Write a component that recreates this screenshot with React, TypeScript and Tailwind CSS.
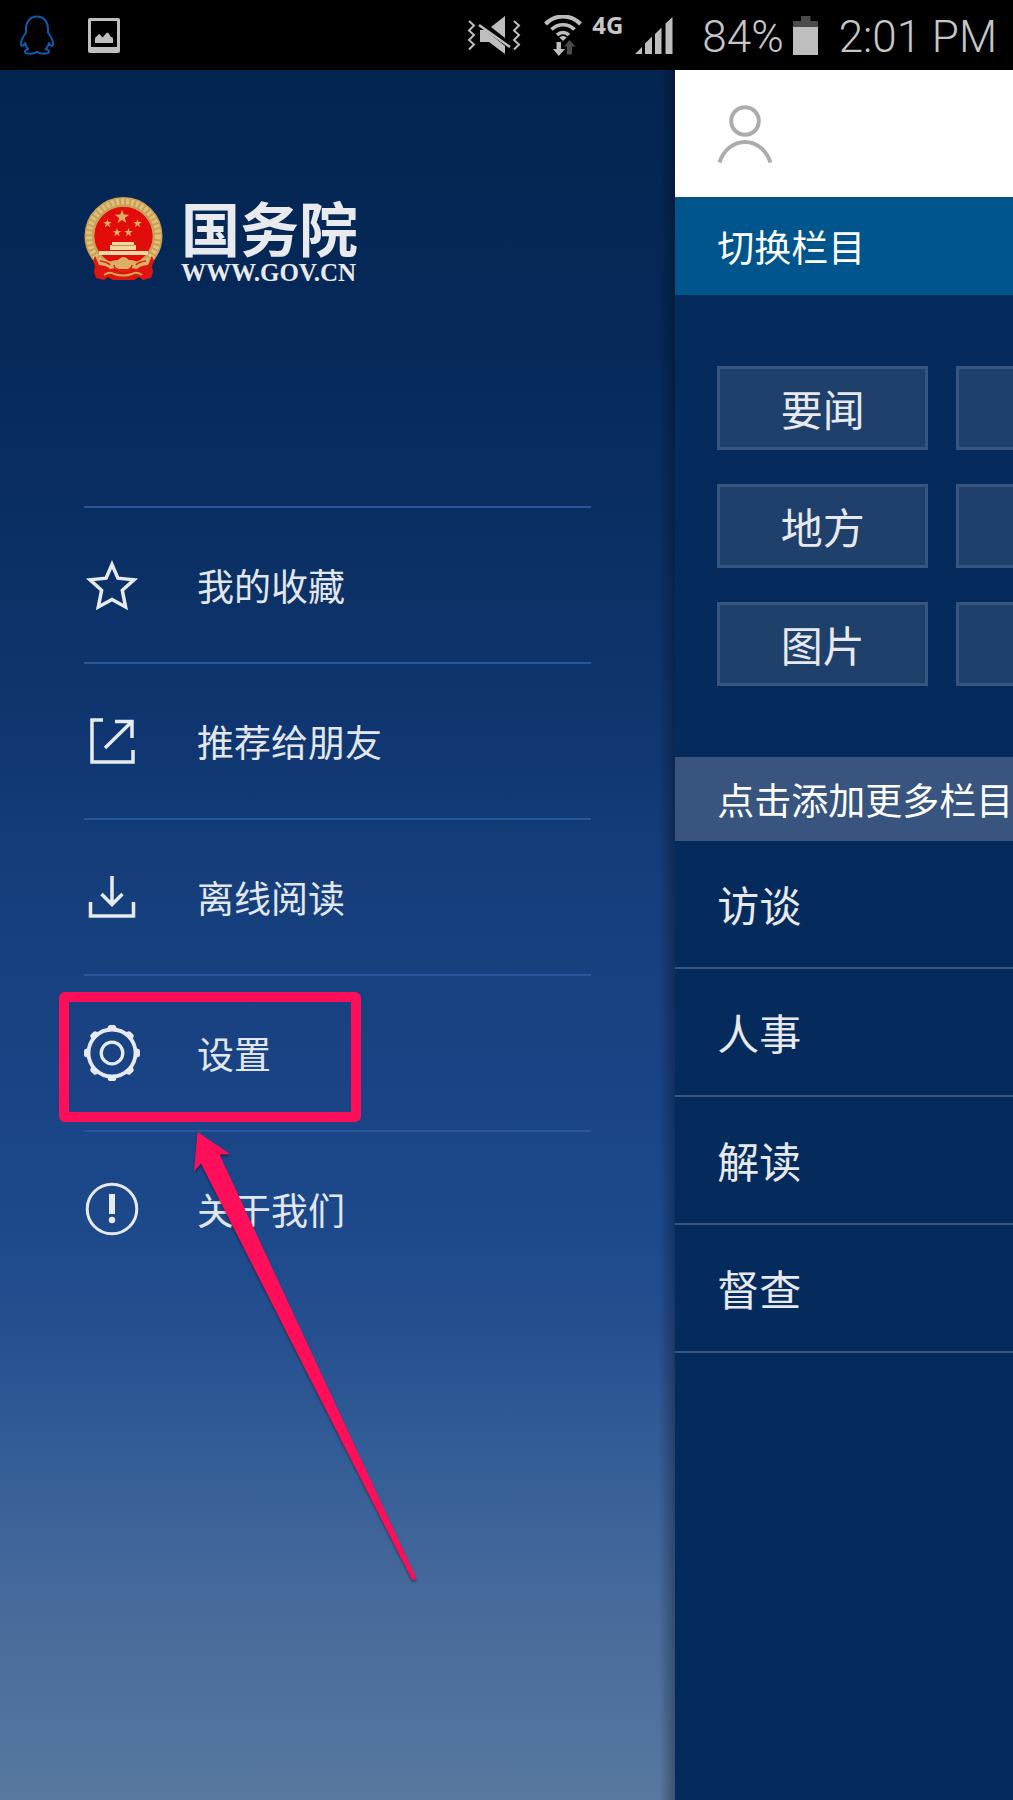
import type { ReactNode } from 'react';

const CJK = "font-['Noto_Sans_CJK_SC',sans-serif]";

function QQIcon() {
  return (
    <svg width="34" height="40" viewBox="0 0 34 40" fill="none" stroke="#0d5cad" strokeWidth="2" strokeLinejoin="round" aria-hidden="true">
      <path d="M17 1.500C9.500 1.500 6 7.500 6 14v3.500C3.500 21 1 25 1 28.500c0 1.500.3 2.500 1 2.500 1.200 0 2.200-1.600 3-3 .6 2.500 1.600 4.500 3.200 6-2 .6-3.200 1.400-3.200 2.700 0 1.500 2 2 5.500 2 3 0 5-.7 6.500-2 1.500 1.300 3.500 2 6.500 2 3.500 0 5.500-.5 5.500-2 0-1.300-1.200-2.100-3.200-2.700 1.600-1.500 2.600-3.500 3.200-6 .8 1.400 1.800 3 3 3 .7 0 1-1 1-2.500 0-3.500-2.500-7.500-5-11V14C28 7.500 24.500 1.500 17 1.500z" />
    </svg>
  );
}

function PictureIcon() {
  return (
    <svg width="32" height="35" viewBox="0 0 32 35" fill="#bebebe" aria-hidden="true">
      <path fillRule="evenodd" d="M2 0h28a2 2 0 0 1 2 2v31a2 2 0 0 1-2 2H2a2 2 0 0 1-2-2V2a2 2 0 0 1 2-2zM3 3v26h26V3z" />
      <path d="M7 25v-5l4-4 1 .5 2.500 3 4.500-5 2 1 1.500 3 2.500 1.500v5z" />
    </svg>
  );
}

function MuteVibrateIcon() {
  return (
    <svg width="54" height="38" viewBox="0 0 54 38" fill="#bebebe" aria-hidden="true">
      <path d="M2 5l5 4.500-5 5 5 4.500-5 5 5 4.500-5 5M47 5l5 4.500-5 5 5 4.500-5 5 5 4.500-5 5" fill="none" stroke="#bebebe" strokeWidth="2" />
      <path d="M38 0v22L24 11z" />
      <path d="M13 14h5l20 16v8L22 26h-9z" />
      <path d="M12 9l31 22" stroke="#bebebe" strokeWidth="2.500" />
    </svg>
  );
}

function WifiIcon() {
  return (
    <svg width="38" height="41" viewBox="0 0 38 41" fill="none" stroke="#bebebe" aria-hidden="true">
      <path d="M1.500 9C11-1 27-1 36.500 9" strokeWidth="4" />
      <path d="M7.500 14.500c6.500-6.500 16.500-6.500 23 0" strokeWidth="3.500" />
      <path d="M13 20c3.500-3.500 8.500-3.500 12 0" strokeWidth="3.500" />
      <path d="M15.500 22.500c2-2 5-2 7 0L19 26z" fill="#bebebe" stroke="none" />
      <path d="M12.500 27h4.500v7h4l-6.200 7L9 34h3.500z" fill="#bebebe" stroke="none" />
      <path d="M23 39.500h5v-8h3.500L25.500 25 20 31.500h3z" fill="#4b4b4b" stroke="none" />
    </svg>
  );
}

function SignalIcon() {
  return (
    <svg width="38" height="37" viewBox="0 0 38 37" fill="#bebebe" aria-hidden="true">
      <path d="M0 37l7-7v7zM10 37V26.500l7-7V37zM20 37V17l6.500-6.500V37zM30.500 37V6.500L37.500 0v37z" />
    </svg>
  );
}

function BatteryIcon() {
  return (
    <svg width="25" height="39" viewBox="0 0 25 39" aria-hidden="true">
      <path d="M8 0h9.500v5H25v6H0V5h8z" fill="#4b4b4b" />
      <path d="M0 11h25v28H0z" fill="#bebebe" />
    </svg>
  );
}

const STAR = 'M0-10 2.300-3.200 9.500-3.100 3.700 1.200 5.900 8.100 0 3.900-5.900 8.100-3.700 1.200-9.500-3.100-2.300-3.200z';

function Emblem() {
  return (
    <svg width="79" height="84" viewBox="0 0 79 84" role="img" aria-label="国徽">
      <circle cx="39.500" cy="39" r="36" fill="#de1414" />
      <circle cx="39.500" cy="39" r="34" fill="none" stroke="#c9a058" strokeWidth="10" />
      <circle cx="39.500" cy="39" r="34.500" fill="none" stroke="#dfbf7c" strokeWidth="6" strokeDasharray="3 2" />
      <circle cx="39.500" cy="39" r="29" fill="#e20d0b" />
      <path d="M11 59l-2 5 2 5-1 6 2 6 8 2 4-3 5 3h21l5-3 4 3 8-2 2-6-1-6 2-5-2-5-6 8-45 0z" fill="#df1610" />
      <g fill="#dfae62">
        <path d={STAR} transform="translate(38 20) scale(.75)" />
        <path d={STAR} transform="translate(23.500 26.500) scale(.45)" />
        <path d={STAR} transform="translate(53.500 26.500) scale(.45)" />
        <path d={STAR} transform="translate(33 35.500) scale(.45)" />
        <path d={STAR} transform="translate(44.500 35.500) scale(.45)" />
      </g>
      <path d="M28 45h22v3h2v5H26v-5h2zM15 54h49v4H15z" fill="#f0d9a0" />
      <path d="M28 48.500h22" stroke="#c9924a" strokeWidth="1" />
      <path d="M12 61q8 1 14 3.500 5-2 8-1.500 5.500-6 11 0 4-.5 8 1.500 6-2.500 14-3.500l-3 7q-8 .500-11 4l-6-1-3 1H35l-3-1-6 1q-3-3.500-11-4z" fill="#d9b065" />
      <path d="M30 68a9 6 0 0 0 18 0M16 64q8 1 10 4M62 64q-8 1-10 4" stroke="#e2270f" strokeWidth="1.500" fill="none" />
      <path d="M20 78q6-4 10-1 9 3 18 0 4-3 10 1" stroke="#d9a850" strokeWidth="2" fill="none" />
    </svg>
  );
}

function StarIcon() {
  return (
    <svg width="56" height="56" viewBox="0 0 56 56" fill="none" stroke="#e7ebf0" strokeWidth="3.500" aria-hidden="true">
      <path d="M28 7.500l5.900 13.700 16.100 1.600-11.700 10.500 3.300 16.700L28 42.500 14.300 50l3.300-16.700L6 22.800l16.100-1.600z" />
    </svg>
  );
}

function ShareIcon() {
  return (
    <svg width="56" height="56" viewBox="0 0 56 56" fill="none" stroke="#e7ebf0" strokeWidth="3.500" aria-hidden="true">
      <path d="M19 7H8v42h41V37" />
      <path d="M31 8.500h17v16.500M48 8.500L21 35" />
    </svg>
  );
}

function DownloadIcon() {
  return (
    <svg width="56" height="56" viewBox="0 0 56 56" fill="none" stroke="#e7ebf0" strokeWidth="3.500" aria-hidden="true">
      <path d="M6.500 33v14h43V33" />
      <path d="M28 7v28M17.500 25L28 35.500 38.500 25" />
    </svg>
  );
}

const TEETH = [0, 45, 90, 135, 180, 225, 270, 315];

function GearIcon() {
  return (
    <svg width="56" height="56" viewBox="0 0 56 56" fill="none" stroke="#e7ebf0" aria-hidden="true">
      <circle cx="28" cy="28" r="23.500" strokeWidth="3.800" />
      <circle cx="28" cy="28" r="10.800" strokeWidth="3.300" />
      {TEETH.map((angle) => (
        <path key={angle} d="M22.500 6l1.500-4.500q.5-1.500 2-1.500h4q1.500 0 2 1.500L33.500 6z" fill="#e7ebf0" stroke="none" transform={`rotate(${angle} 28 28)`} />
      ))}
    </svg>
  );
}

function AboutIcon() {
  return (
    <svg width="56" height="56" viewBox="0 0 56 56" fill="none" stroke="#e7ebf0" aria-hidden="true">
      <circle cx="28" cy="28" r="24.800" strokeWidth="3" />
      <path d="M28 13v20" strokeWidth="6" />
      <circle cx="28" cy="39" r="3.200" fill="#e7ebf0" stroke="none" />
    </svg>
  );
}

function UserIcon() {
  return (
    <svg width="56" height="58" viewBox="0 0 56 58" fill="none" stroke="#acacac" strokeWidth="4" aria-hidden="true">
      <circle cx="28" cy="16" r="13.800" />
      <path d="M2.500 57.500C6.500 45 16.500 37 28 37s21.500 8 25.500 20.500" />
    </svg>
  );
}

function Arrow() {
  return (
    <svg
      className="pointer-events-none absolute left-[106px] top-0 z-10 drop-shadow-[0_2px_1px_rgba(0,0,0,0.4)]"
      width="230"
      height="455"
      viewBox="0 2 230 455"
      fill="#ff0f5a"
      aria-hidden="true"
    >
      <path d="M7.500 2L40 24l-10.500.5L226 447.500q-.500 4-4 2L11 33.500 4 41.500z" />
    </svg>
  );
}

type MenuItem = { label: string; icon: ReactNode; overlay?: ReactNode };

const MENU: MenuItem[] = [
  { label: '我的收藏', icon: <StarIcon /> },
  { label: '推荐给朋友', icon: <ShareIcon /> },
  { label: '离线阅读', icon: <DownloadIcon /> },
  {
    label: '设置',
    icon: <GearIcon />,
    overlay: (
      <span className="pointer-events-none absolute -left-[25px] top-4 h-[130px] w-[302px] rounded-md border-10 border-[#ff0f5a]" />
    ),
  },
  { label: '关于我们', icon: <AboutIcon />, overlay: <Arrow /> },
];

const CHANNELS = ['要闻', '', '地方', '', '图片', ''];
const MORE = ['访谈', '人事', '解读', '督查'];

function StatusBar() {
  return (
    <header className="flex h-[70px] shrink-0 items-center justify-between bg-black pl-5 pr-4 font-[Roboto,sans-serif] text-[#c6c6c6]">
      <div className="flex items-center gap-[34px]">
        <QQIcon />
        <PictureIcon />
      </div>
      <div className="flex items-center">
        <MuteVibrateIcon />
        <span className="ml-[23px]"><WifiIcon /></span>
        <span className="ml-[10px] mb-5 font-['Noto_Sans',sans-serif] text-2xl leading-6 font-bold">4G</span>
        <span className="ml-3"><SignalIcon /></span>
        <span className="ml-[29px] pt-1 text-[44px] leading-[56px] font-light">84%</span>
        <span className="ml-[9px]"><BatteryIcon /></span>
        <span className="ml-[21px] pt-1 text-[44px] leading-[56px] font-light">2:01 PM</span>
      </div>
    </header>
  );
}

function Drawer() {
  return (
    <aside className="relative w-2/3 shrink-0 bg-[linear-gradient(180deg,#042550_0%,#06295a_16%,#0b3065_28%,#0f3670_38%,#153e7b_47%,#1a4486_60%,#1d498b_67%,#264f8f_73%,#335d97_80%,#46699b_88%,#58789f_100%)] px-[84px]">
      <div className="h-[436px] pt-[123px]">
        <div className="flex items-center gap-[18px]">
          <Emblem />
          <div className="flex flex-col text-[#e8eaee]">
            <span className="text-[59px] leading-[68px] font-bold">国务院</span>
            <span className="font-['Liberation_Serif',serif] text-[25px] leading-6 font-bold">WWW.GOV.CN</span>
          </div>
        </div>
      </div>
      <nav>
        <ul>
          {MENU.map((item) => (
            <li key={item.label} className="relative h-[156px] border-t-2 border-[#28579a]">
              <a href="#" className="flex h-full items-center gap-[57px] text-[37px] leading-[48px] font-normal text-[#e2e7ee]">
                {item.icon}
                <span>{item.label}</span>
              </a>
              {item.overlay}
            </li>
          ))}
        </ul>
      </nav>
      <div className="pointer-events-none absolute inset-y-0 right-0 w-4 bg-linear-to-r from-transparent to-black/30" />
    </aside>
  );
}

function Channels() {
  return (
    <main className="min-w-0 flex-1 overflow-hidden bg-[#052b5c]">
      <div className="flex h-[127px] items-center bg-white pl-[42px]">
        <button type="button" aria-label="用户"><UserIcon /></button>
      </div>
      <h2 className="flex h-[98px] items-center bg-[#00558d] pl-[42px] text-[37px] leading-[48px] font-normal text-white">切换栏目</h2>
      <div className="grid grid-cols-[211px_211px] gap-x-7 gap-y-[34px] py-[71px] pl-[42px]">
        {CHANNELS.map((label, i) => (
          <button key={i} type="button" className="h-[84px] border-3 border-[#38557f] bg-[#1f406a] text-[42px] leading-[56px] font-normal text-[#e7e9ee]">
            {label}
          </button>
        ))}
      </div>
      <h2 className="flex h-[84px] items-center bg-[#38557f] pl-[42px] text-[37px] leading-[48px] font-normal whitespace-nowrap text-white">点击添加更多栏目</h2>
      <ul>
        {MORE.map((label) => (
          <li key={label} className="h-[128px] border-b-2 border-[#38557f]">
            <button type="button" className="flex h-full w-full items-center pl-[42px] text-[42px] leading-[56px] font-normal text-[#e7e9ee]">
              {label}
            </button>
          </li>
        ))}
      </ul>
    </main>
  );
}

export default function App() {
  return (
    <div className={`flex min-h-screen flex-col overflow-hidden bg-black ${CJK}`} lang="zh-CN">
      <StatusBar />
      <div className="flex flex-1">
        <Drawer />
        <Channels />
      </div>
    </div>
  );
}
